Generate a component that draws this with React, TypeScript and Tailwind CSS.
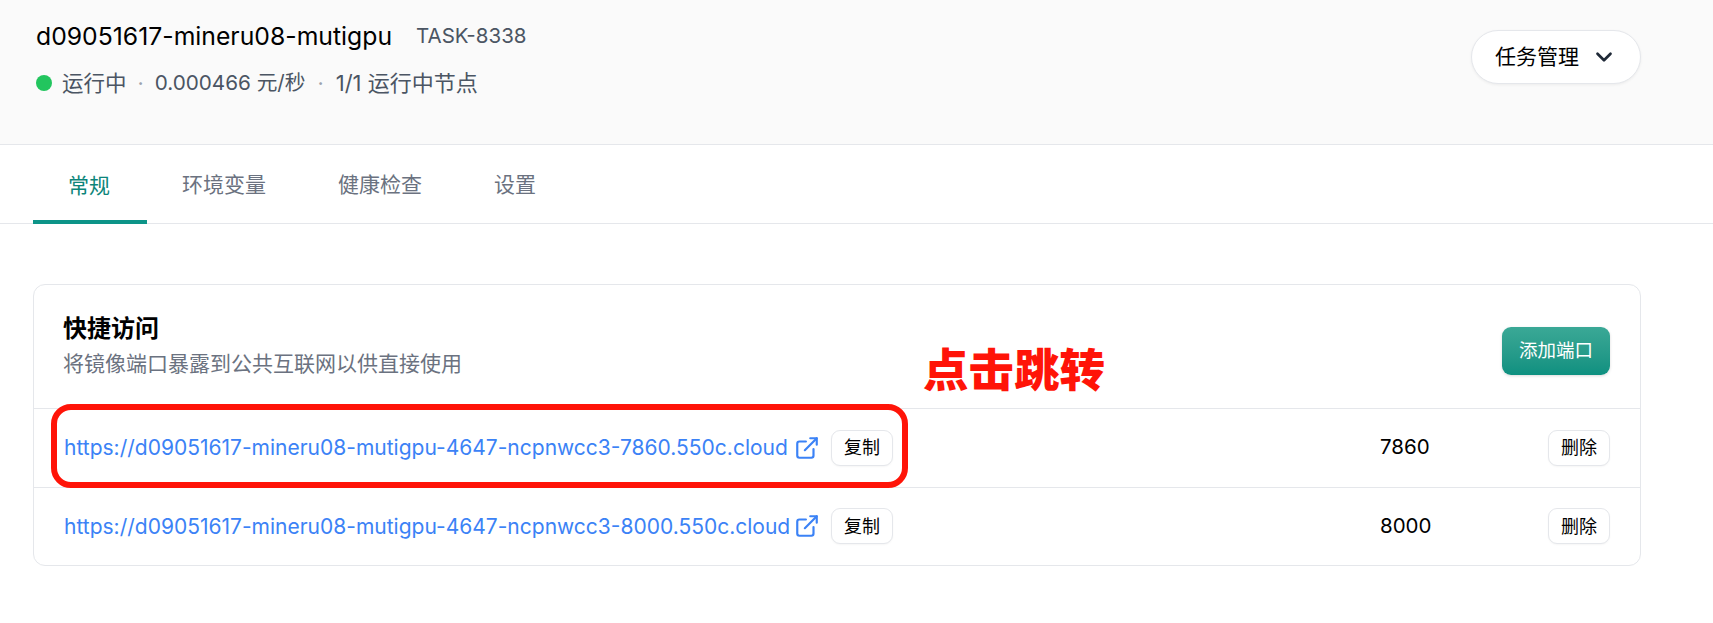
import { ChevronDown, ExternalLink } from "lucide-react";

const font = '"Inter", "Noto Sans CJK SC", sans-serif';

const tabs = ["常规", "环境变量", "健康检查", "设置"];

const ports = [
  { url: "https://d09051617-mineru08-mutigpu-4647-ncpnwcc3-7860.550c.cloud", port: "7860" },
  { url: "https://d09051617-mineru08-mutigpu-4647-ncpnwcc3-8000.550c.cloud", port: "8000" },
];

function SmallButton({ label }: { label: string }) {
  return (
    <button className="flex h-[36px] w-[62px] items-center justify-center rounded-[9px] border border-[#e5e7eb] bg-white text-[18px] text-black shadow-[0_1px_2px_rgba(0,0,0,0.04)]">
      {label}
    </button>
  );
}

export default function App() {
  return (
    <div className="relative h-[623px] w-[1713px] overflow-hidden bg-white" style={{ fontFamily: font }}>
      {/* Header */}
      <header className="flex h-[145px] items-start justify-between border-b border-[#e5e7eb] bg-[#fafafa] pl-[36px] pr-[72px]">
        <div>
          <div className="mt-[19px] flex items-center">
            <h1 className="text-[24.75px] leading-[34px] text-black">d09051617-mineru08-mutigpu</h1>
            <span className="ml-[24px] text-[20.5px] text-[#4b5563]">TASK-8338</span>
          </div>
          <div className="mt-[15px] flex items-center text-[21.5px] leading-[30px] text-[#4b5563]">
            <span className="mr-[10px] h-[16px] w-[16px] rounded-full bg-[#22c55e]" />
            <span>运行中</span>
            <span className="mx-[11px] text-[#9ca3af]">·</span>
            <span className="text-[20.7px]">0.000466 元/秒</span>
            <span className="mx-[12px] text-[#9ca3af]">·</span>
            <span className="text-[22px]">1/1 运行中节点</span>
          </div>
        </div>
        <button className="mt-[30px] flex h-[54px] w-[170px] items-center justify-center gap-[12px] rounded-full border border-[#e5e7eb] bg-white text-[21px] text-black shadow-[0_1px_3px_rgba(0,0,0,0.06)]">
          任务管理
          <ChevronDown className="h-[26px] w-[26px] text-[#1f2937]" strokeWidth={2.5} />
        </button>
      </header>

      {/* Tabs */}
      <nav className="flex h-[79px] border-b border-[#e5e7eb] pl-[33px]">
        {tabs.map((tab, i) => (
          <div
            key={tab}
            className={`flex items-center pl-[35px] pr-[37px] pt-[2px] text-[21px] ${
              i === 0 ? "-mb-px border-b-[4px] border-[#0d9488] pt-[6px] text-[#0d857a]" : "text-[#6b7280]"
            }`}
          >
            {tab}
          </div>
        ))}
      </nav>

      {/* Card */}
      <section className="ml-[33px] mt-[60px] w-[1608px] rounded-[12px] border border-[#e5e7eb] bg-white">
        <div className="flex h-[123px] items-center justify-between pl-[29px] pr-[30px]">
          <div>
            <h2 className="-mt-[1px] text-[24px] font-bold leading-[32px] text-black">快捷访问</h2>
            <p className="mt-[4px] text-[21px] leading-[30px] text-[#6b7280]">将镜像端口暴露到公共互联网以供直接使用</p>
          </div>
          <button className="mt-[8px] h-[48px] w-[108px] rounded-[9px] bg-gradient-to-b from-[#3aa896] to-[#0d9080] text-[18.5px] text-white shadow-[0_1px_3px_rgba(0,0,0,0.15)]">
            添加端口
          </button>
        </div>
        {ports.map((row) => (
          <div key={row.port} className="flex h-[78.5px] items-center border-t border-[#e5e7eb] pl-[30px] pr-[30px]">
            <a className="w-[726px] whitespace-nowrap text-[21px] text-[#3b82f6]">{row.url}</a>
            <ExternalLink className="ml-[4px] h-[26px] w-[26px] text-[#3b82f6]" />
            <div className="ml-[11px]">
              <SmallButton label="复制" />
            </div>
            <span className="ml-auto mr-[118px] w-[50px] text-[20.5px] text-black">{row.port}</span>
            <SmallButton label="删除" />
          </div>
        ))}
      </section>

      {/* Red annotation drawn over the screenshot */}
      <div className="absolute left-[51px] top-[404px] h-[84px] w-[857px] rounded-[20px] border-[6px] border-[#ff1408]" />
      <div className="absolute left-[923px] top-[339px] text-[45.5px] font-black leading-[64px] text-[#ff1408]">点击跳转</div>
    </div>
  );
}
